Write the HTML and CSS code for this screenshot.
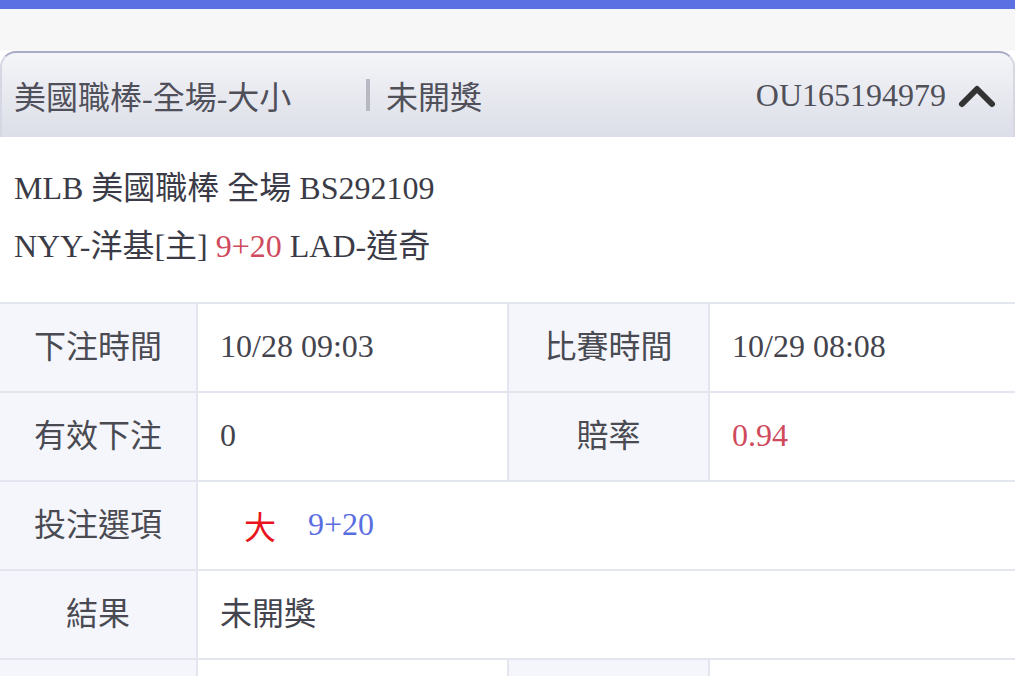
FILE: index.html
```html
<!DOCTYPE html>
<html lang="zh-Hant">
<head>
<meta charset="utf-8">
<link rel="stylesheet" href="styles.css">
</head>
<body>
<div class="topbar"></div>
<div class="page">
  <div class="card">
    <div class="card-head">
      <div class="head-left">
        <span class="title">美國職棒-全場-大小</span>
        <span class="status">未開獎</span>
      </div>
      <div class="head-right">
        <span class="order">OU165194979</span>
        <svg class="chevron" width="42" height="26" viewBox="0 0 42 26"><path d="M6 21 L21 6 L36 21" fill="none" stroke="#333" stroke-width="6" stroke-linecap="round" stroke-linejoin="round"/></svg>
      </div>
    </div>
    <div class="card-info">
      <div class="line">MLB 美國職棒 全場 BS292109</div>
      <div class="line">NYY-洋基[主] <span class="red">9+20</span> LAD-道奇</div>
    </div>
    <div class="grid">
      <div class="cell label">下注時間</div>
      <div class="cell value">10/28 09:03</div>
      <div class="cell label">比賽時間</div>
      <div class="cell value">10/29 08:08</div>

      <div class="cell label">有效下注</div>
      <div class="cell value">0</div>
      <div class="cell label">賠率</div>
      <div class="cell value red">0.94</div>

      <div class="cell label">投注選項</div>
      <div class="cell value span3"><span class="pick">大</span><span class="blue">9+20</span></div>

      <div class="cell label">結果</div>
      <div class="cell value span3 cjk">未開獎</div>

      <div class="cell label"></div>
      <div class="cell value"></div>
      <div class="cell label"></div>
      <div class="cell value"></div>
    </div>
  </div>
</div>
</body>
</html>
```

FILE: styles.css
```css
* { box-sizing: border-box; }
html, body { margin: 0; padding: 0; }
body {
  background: #f7f7f7;
  font-family: "Liberation Serif", "Noto Sans CJK TC", serif;
  font-size: 32px;
  color: #3b3b47;
  overflow: hidden;
  height: 676px;
}
.topbar { height: 9px; background: #5a70e3; }
.page { padding-top: 42px; }
.card { background: #fff; }
.card-head {
  height: 86px;
  border: 2px solid #aaabc5;
  border-left-color: #d6d7e3;
  border-right-color: #d6d7e3;
  border-bottom: none;
  border-radius: 16px 16px 0 0;
  background: linear-gradient(#f4f5f8, #dcdee8);
  display: flex;
  align-items: center;
  justify-content: space-between;
  padding: 0 15px 0 12px;
  color: #50505a;
}
.head-left { display: flex; align-items: center; }
.title { width: 352px; }
.status {
  border-left: 4px solid #b8b8c2;
  padding-left: 16px;
  line-height: 32px;
  font-family: "Noto Sans CJK TC", sans-serif;
}
.head-right { display: flex; align-items: center; gap: 10px; }
.chevron { display: block; margin-top: 2px; }
.card-info { padding: 22px 14px 27px; }
.line { line-height: 58px; white-space: nowrap; }
.red { color: #cf4a5c; }
.blue { color: #5b6ee1; }
.pick { color: #e8141c; margin: 0 32px 0 24px; font-family: "Noto Sans CJK TC", sans-serif; }
.grid {
  display: grid;
  grid-template-columns: 198px 311px 201px 1fr;
  grid-auto-rows: 89px;
  border-top: 2px solid #e3e6ef;
}
.cell {
  display: flex;
  align-items: center;
  border-bottom: 2px solid #e3e6ef;
  border-right: 2px solid #e3e6ef;
  color: #44444e;
}
.cell:nth-child(4n) { border-right: none; }
.label {
  background: #f5f6fb;
  justify-content: center;
  font-family: "Noto Sans CJK TC", sans-serif;
  color: #4a4a52;
  padding-bottom: 8px;
}
.value { padding-left: 22px; background: #fff; padding-bottom: 2px; }
.value.red { color: #cf4a5c; }
.value.cjk { font-family: "Noto Sans CJK TC", sans-serif; padding-bottom: 8px; }
.span3 { grid-column: span 3; border-right: none; }
```
